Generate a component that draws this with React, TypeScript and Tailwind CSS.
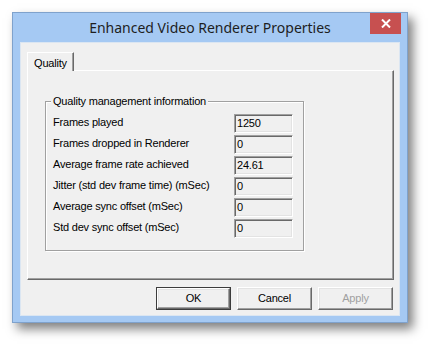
import React from "react";

const rows: [string, string][] = [
  ["Frames played", "1250"],
  ["Frames dropped in Renderer", "0"],
  ["Average frame rate achieved", "24.61"],
  ["Jitter (std dev frame time) (mSec)", "0"],
  ["Average sync offset (mSec)", "0"],
  ["Std dev sync offset (mSec)", "0"],
];

function Btn({ label, def, disabled }: { label: string; def?: boolean; disabled?: boolean }) {
  return (
    <div
      className={
        "w-[75px] h-[23px] flex items-center justify-center " +
        (def ? "border border-[#3c3c3c]" : "")
      }
    >
      <div
        className={
          "w-full h-full flex items-center justify-center border-t border-l border-t-white border-l-white border-b border-r border-b-[#696969] border-r-[#696969] shadow-[inset_-1px_-1px_0_#a0a0a0,inset_1px_1px_0_#e3e3e3] " +
          (disabled ? "text-[#a0a0a0]" : "text-black")
        }
      >
        {label}
      </div>
    </div>
  );
}

export default function App() {
  return (
    <div
      className="w-[428px] h-[345px] bg-white pt-[12px] pl-[12px]"
      style={{ fontFamily: '"Liberation Sans", Arial, sans-serif' }}
    >
      <div className="w-[396px] h-[311px] bg-[#a5c9f3] border border-[#7fa2cc] shadow-[5px_6px_10px_rgba(0,0,0,0.5)] flex flex-col">
        {/* title bar */}
        <div className="relative h-[29px] flex items-center justify-center">
          <span
            className="text-[14px] text-[#1e1e1e] leading-none"
            style={{ fontFamily: '"Noto Sans", "Open Sans", sans-serif' }}
          >
            Enhanced Video Renderer Properties
          </span>
          <div className="absolute right-[6px] top-0 w-[31px] h-[21px] bg-[#c75050] flex items-center justify-center">
            <svg width="10" height="9" viewBox="0 0 10 9">
              <path d="M1 0.5 L9 8.5 M9 0.5 L1 8.5" stroke="white" strokeWidth="2" />
            </svg>
          </div>
        </div>
        {/* client */}
        <div className="mx-[7px] mb-[6px] flex-1 bg-[#f0f0f0] border border-[#dbe6f2] flex flex-col px-[6px] pt-[9px] text-[11px] tracking-[-0.2px] text-black">
          {/* tab strip */}
          <div className="flex h-[18px] relative z-10">
            <div className="w-[47px] h-[19px] bg-[#f0f0f0] border-t border-l border-white border-r border-r-[#696969] shadow-[inset_-1px_0_0_#a0a0a0] flex items-start justify-center pt-[2px]">
              Quality
            </div>
          </div>
          {/* panel */}
          <div className="w-[367px] h-[210px] border-t border-l border-white border-b border-r border-b-[#696969] border-r-[#696969] shadow-[inset_-1px_-1px_0_#a0a0a0] pl-[17px] pt-[30px]">
            <div className="relative w-[259px] h-[150px] border border-[#a0a0a0] shadow-[1px_1px_0_#fff,inset_1px_1px_0_#fff]">
              <div className="absolute -top-[8px] left-[5px] bg-[#f0f0f0] px-[2px] leading-[14px]">
                Quality management information
              </div>
              <div className="flex flex-col gap-[2px] pt-[12px] pl-[7px]">
                {rows.map(([l, v]) => (
                  <div key={l} className="flex items-center h-[19px]">
                    <div className="w-[181px] -mt-[2px]">{l}</div>
                    <div className="w-[59px] h-[19px] border-t border-l border-t-[#a0a0a0] border-l-[#a0a0a0] border-b border-r border-b-white border-r-white shadow-[inset_1px_1px_0_#696969,inset_-1px_-1px_0_#e3e3e3] pl-[2px] leading-[17px]">
                      {v}
                    </div>
                  </div>
                ))}
              </div>
            </div>
          </div>
          {/* buttons */}
          <div className="flex justify-end gap-[6px] mt-[7px]">
            <Btn label="OK" def />
            <Btn label="Cancel" />
            <Btn label="Apply" disabled />
          </div>
        </div>
      </div>
    </div>
  );
}
